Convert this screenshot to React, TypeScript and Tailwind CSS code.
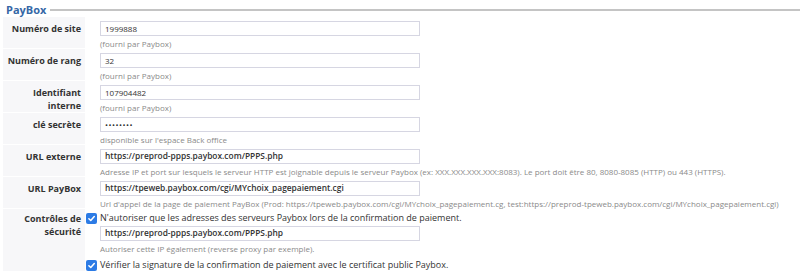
type Field = {
  label: string[];
  value: string;
  help: string;
  bold?: boolean;
  secret?: boolean;
};

const fields: Field[] = [
  { label: ["Numéro de site"], value: "1999888", help: "(fourni par Paybox)" },
  { label: ["Numéro de rang"], value: "32", help: "(fourni par Paybox)" },
  { label: ["Identifiant", "interne"], value: "107904482", help: "(fourni par Paybox)" },
  { label: ["clé secrète"], value: "••••••••", help: "disponible sur l'espace Back office", secret: true },
  {
    label: ["URL externe"],
    value: "https://preprod-ppps.paybox.com/PPPS.php",
    help: "Adresse IP et port sur lesquels le serveur HTTP est joignable depuis le serveur Paybox (ex: XXX.XXX.XXX.XXX:8083). Le port doit être 80, 8080-8085 (HTTP) ou 443 (HTTPS).",
    bold: true,
  },
  {
    label: ["URL PayBox"],
    value: "https://tpeweb.paybox.com/cgi/MYchoix_pagepaiement.cgi",
    help: "Url d'appel de la page de paiement PayBox (Prod: https://tpeweb.paybox.com/cgi/MYchoix_pagepaiement.cg, test:https://preprod-tpeweb.paybox.com/cgi/MYchoix_pagepaiement.cgi)",
    bold: true,
  },
];

function Input({ value, bold, secret }: { value: string; bold?: boolean; secret?: boolean }) {
  return (
    <div
      className={`w-[320px] h-[15px] border border-[#d6d6e2] bg-white pl-[4px] flex items-center text-[#333] leading-none ${bold ? "font-semibold text-[8.4px]" : "text-[8px]"} ${secret ? "tracking-[0.5px] text-[7px]" : ""}`}
    >
      {value}
    </div>
  );
}

function Check({ text }: { text: string }) {
  return (
    <div className="flex items-center gap-[3px] -ml-[14px] text-[9px] text-[#333] leading-[12px]">
      <span className="w-[11px] h-[11px] rounded-[2px] bg-[#2c7be5] flex items-center justify-center">
        <svg width="9" height="9" viewBox="0 0 12 12" fill="none">
          <path d="M2.5 6.3 L5 8.7 L9.7 3.3" stroke="white" strokeWidth="2" strokeLinecap="round" strokeLinejoin="round" />
        </svg>
      </span>
      {text}
    </div>
  );
}

export default function App() {
  return (
    <div className="w-[800px] h-[278px] bg-white overflow-hidden pl-[3px] pt-[1px]" style={{ fontFamily: '"Open Sans", "Noto Sans", sans-serif' }}>
      <div className="flex items-center gap-[4px] pl-[3px] h-[16px]">
        <span className="text-[11px] font-bold text-[#3567a6] leading-none">PayBox</span>
        <div className="flex-1 h-[2px] bg-[#c4c4c4] mt-[1px]" />
      </div>
      <div className="grid grid-cols-[82px_1fr] gap-y-[1px]">
        {fields.map((f) => (
          <div key={f.label.join(" ")} className="contents">
            <div className="bg-[#f7f7f9] pr-[4px] pt-[5px] h-[31px] text-right text-[9px] font-bold text-[#333] leading-[13px]">
              {f.label.map((l) => (
                <div key={l}>{l}</div>
              ))}
            </div>
            <div className="pl-[15px] pt-[4px] h-[31px] flex flex-col">
              <Input value={f.value} bold={f.bold} secret={f.secret} />
              <div className="text-[8px] text-[#8a8a8a] leading-[9px] mt-[3px] whitespace-nowrap">{f.help}</div>
            </div>
          </div>
        ))}
        <div className="bg-[#f7f7f9] pr-[4px] pt-[3px] h-[62px] text-right text-[9px] font-bold text-[#333] leading-[13px]">
          <div>Contrôles de</div>
          <div>sécurité</div>
        </div>
        <div className="pl-[15px] pt-[3px] flex flex-col">
          <Check text="N'autoriser que les adresses des serveurs Paybox lors de la confirmation de paiement." />
          <div className="mt-[2px]">
            <Input value="https://preprod-ppps.paybox.com/PPPS.php" bold />
          </div>
          <div className="text-[8px] text-[#8a8a8a] leading-[9px] mt-[3px]">Autoriser cette IP également (reverse proxy par exemple).</div>
          <div className="mt-[6px]">
            <Check text="Vérifier la signature de la confirmation de paiement avec le certificat public Paybox." />
          </div>
        </div>
      </div>
    </div>
  );
}
